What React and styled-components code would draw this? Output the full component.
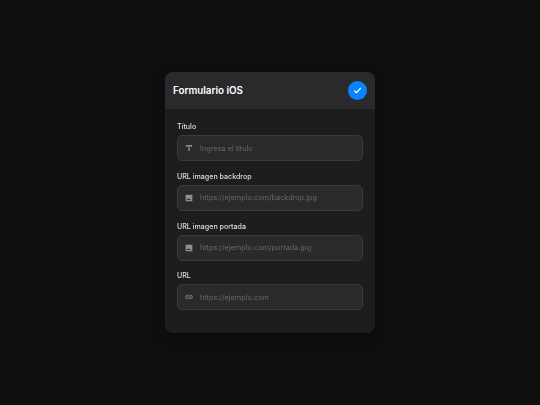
import React from "react";
import styled, { createGlobalStyle } from "styled-components";

const Global = createGlobalStyle`
  html, body { margin: 0; padding: 0; background: #0f0f0f; }
  #root { min-height: 405px; }
`;

const Page = styled.div`
  width: 540px;
  height: 405px;
  box-sizing: border-box;
  padding-top: 72px;
  display: flex;
  justify-content: center;
  align-items: flex-start;
  background: #0f0f0f;
  font-family: "Inter", "Noto Sans", sans-serif;
`;

const Card = styled.section`
  width: 210px;
  height: 261px;
  border-radius: 8px;
  overflow: hidden;
  background: #1d1d1e;
  box-shadow: 0 4px 14px rgba(0, 0, 0, 0.25);
  filter: blur(0.2px);
`;

const Header = styled.header`
  height: 37px;
  box-sizing: border-box;
  padding: 0 8px;
  display: flex;
  align-items: center;
  justify-content: space-between;
  background: #2a2a2c;
`;

const Title = styled.h1`
  margin: 0;
  font-size: 9.800px;
  font-weight: 600;
  color: #ffffff;
`;

const Submit = styled.button`
  width: 19px;
  height: 19px;
  padding: 0;
  border: 0;
  border-radius: 50%;
  background: #0a84ff;
  display: flex;
  align-items: center;
  justify-content: center;
  color: #fff;
`;

const Form = styled.form`
  padding: 13px 12px 0;
  display: flex;
  flex-direction: column;
  gap: 10.800px;
`;

const Field = styled.div`
  display: flex;
  flex-direction: column;
  gap: 3px;
`;

const Label = styled.label`
  font-size: 7.100px;
  line-height: 10px;
  font-weight: 500;
  color: #dedee0;
`;

const InputBox = styled.div`
  height: 26px;
  box-sizing: border-box;
  padding: 0 8px 0 7px;
  display: flex;
  align-items: center;
  gap: 7px;
  border-radius: 5px;
  border: 1px solid #3a3a3c;
  background: #2a2a2c;
  color: #8e8e93;
`;

const IconSlot = styled.span`
  width: 8px;
  height: 8px;
  flex: none;
  display: flex;
  align-items: center;
  justify-content: center;
`;

const Input = styled.input`
  flex: 1;
  min-width: 0;
  padding: 0;
  border: 0;
  outline: 0;
  background: transparent;
  font: 400 7.300px "Inter", "Noto Sans", sans-serif;
  color: #fff;
  &::placeholder { color: #69696c; opacity: 1; }
`;

const CheckIcon = () => (
  <svg width="9" height="9" viewBox="0 0 24 24" fill="none" stroke="currentColor" strokeWidth="3" strokeLinecap="round" strokeLinejoin="round">
    <path d="M4 13l5 5L20 6" />
  </svg>
);

const TextIcon = () => (
  <svg width="8" height="8" viewBox="0 0 24 24" fill="currentColor">
    <path d="M3 3h18v6h-3V7h-4v14h-4V7H6v2H3z" />
  </svg>
);

const ImageIcon = () => (
  <svg width="8" height="8" viewBox="0 0 24 24" fill="currentColor">
    <path d="M4 2h16a2 2 0 0 1 2 2v16a2 2 0 0 1-2 2H4a2 2 0 0 1-2-2V4a2 2 0 0 1 2-2z" />
    <path d="M5 18l4-5 3 3.500 2-2 4 3.500z" fill="#2a2a2c" />
  </svg>
);

const LinkIcon = () => (
  <svg width="10" height="10" viewBox="0 0 24 24" fill="none" stroke="currentColor" strokeWidth="2.400" strokeLinecap="round">
    <path d="M10 7H7a5 5 0 0 0 0 10h3" />
    <path d="M14 7h3a5 5 0 0 1 0 10h-3" />
    <path d="M8 12h8" />
  </svg>
);

const fields = [
  { label: "Título", placeholder: "Ingresa el título", Icon: TextIcon },
  { label: "URL imagen backdrop", placeholder: "https://ejemplo.com/backdrop.jpg", Icon: ImageIcon },
  { label: "URL imagen portada", placeholder: "https://ejemplo.com/portada.jpg", Icon: ImageIcon },
  { label: "URL", placeholder: "https://ejemplo.com", Icon: LinkIcon },
];

export default function App() {
  return (
    <Page>
      <Global />
      <Card>
        <Header>
          <Title>Formulario iOS</Title>
          <Submit type="button" aria-label="Guardar"><CheckIcon /></Submit>
        </Header>
        <Form>
          {fields.map(({ label, placeholder, Icon }) => (
            <Field key={label}>
              <Label>{label}</Label>
              <InputBox>
                <IconSlot><Icon /></IconSlot>
                <Input placeholder={placeholder} />
              </InputBox>
            </Field>
          ))}
        </Form>
      </Card>
    </Page>
  );
}
